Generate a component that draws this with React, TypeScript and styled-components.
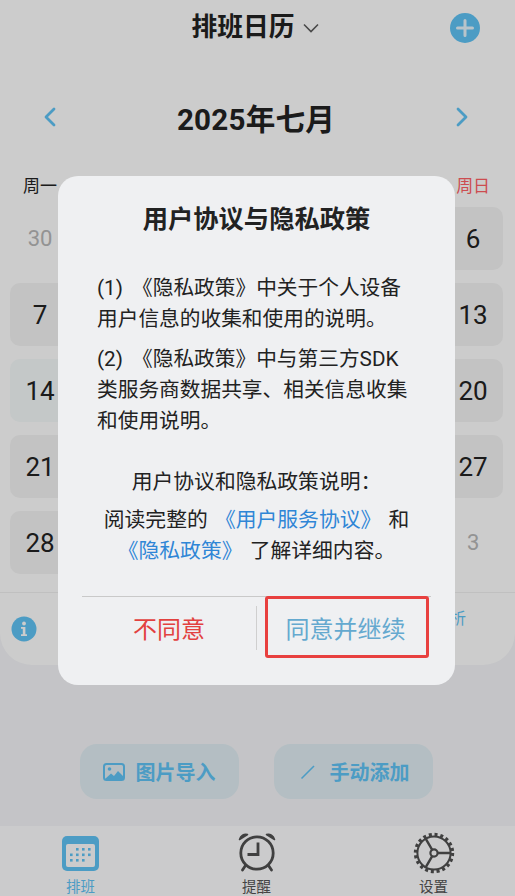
import React from 'react';
import styled, { createGlobalStyle } from 'styled-components';

const GlobalStyle = createGlobalStyle`
  html, body {
    margin: 0;
    padding: 0;
    background: #f5f6f9;
    font-family: Roboto, "Noto Sans CJK SC", sans-serif;
  }
  * { box-sizing: border-box; }
`;

const weekDays = ['周一', '周二', '周三', '周四', '周五', '周六', '周日'];

const days = [
  30, 1, 2, 3, 4, 5, 6,
  7, 8, 9, 10, 11, 12, 13,
  14, 15, 16, 17, 18, 19, 20,
  21, 22, 23, 24, 25, 26, 27,
  28, 29, 30, 31, 1, 2, 3
];

const Chevron: React.FC<{ dir: 'left' | 'right' }> = ({ dir }) => (
  <svg width="14" height="20" viewBox="0 0 14 20" fill="none">
    <path
      d={dir === 'left' ? 'M11 2 L3 10 L11 18' : 'M3 2 L11 10 L3 18'}
      stroke="#60c4f6"
      strokeWidth="2.8"
      strokeLinecap="round"
      strokeLinejoin="round"
    />
  </svg>
);

const GearIcon = () => (
  <svg width="42" height="42" viewBox="0 0 42 42" fill="none" stroke="#505050">
    <circle cx="21" cy="21" r="16.6" strokeWidth="2" />
    <circle cx="21" cy="21" r="18.4" strokeWidth="3.6" strokeDasharray="3 2.78" />
    <circle cx="21" cy="21" r="3.6" strokeWidth="2.2" />
    <path d="M24.6 21 H38 M19.2 17.9 L12.5 6.3 M19.2 24.1 L12.5 35.7" strokeWidth="2.4" />
  </svg>
);

const ClockIcon = () => (
  <svg width="40" height="40" viewBox="0 0 40 40" fill="none" stroke="#505050">
    <circle cx="20" cy="21" r="16.2" strokeWidth="2.8" />
    <path d="M21 10.5 V22.5 H10.5" strokeWidth="2.8" />
    <path d="M2.5 7.5 C3.5 3.5 7 1.5 10.5 2.5 Z M37.5 7.5 C36.5 3.5 33 1.5 29.5 2.5 Z" fill="#505050" strokeWidth="1.5" strokeLinejoin="round" />
    <path d="M8.5 33.5 L5.5 38 M31.5 33.5 L34.5 38" strokeWidth="2.8" strokeLinecap="round" />
  </svg>
);

const CalendarIcon = () => (
  <svg width="37" height="35" viewBox="0 0 37 35">
    <rect x="0" y="0" width="37" height="35" rx="5" fill="#60c4f6" />
    <rect x="4" y="8" width="29" height="23" rx="2" fill="#fefeff" />
    <g fill="#60c4f6">
      {[
        [14, 12], [20, 12], [26, 12],
        [8, 17.5], [14, 17.5], [20, 17.5], [26, 17.5],
        [8, 23], [14, 23], [20, 23]
      ].map(([x, y]) => (
        <rect key={`${x}-${y}`} x={x} y={y} width="2.6" height="2.6" />
      ))}
    </g>
  </svg>
);

export default function App() {
  return (
    <Screen>
      <GlobalStyle />
      <CalendarCard>
        <Header>
          <span />
          <TitleButton>
            <TitleText>排班日历</TitleText>
            <svg width="16" height="10" viewBox="0 0 16 10" fill="none">
              <path d="M1 1.5 L8 8.5 L15 1.5" stroke="#5c5c5c" strokeWidth="1.6" />
            </svg>
          </TitleButton>
          <PlusButton>
            <svg width="30" height="30" viewBox="0 0 30 30">
              <path d="M15 7.5 V22.5 M7.5 15 H22.5" stroke="#fff" strokeWidth="3" strokeLinecap="round" opacity="0.85" />
            </svg>
          </PlusButton>
        </Header>

        <MonthRow>
          <Chevron dir="left" />
          <MonthTitle>2025年七月</MonthTitle>
          <Chevron dir="right" />
        </MonthRow>

        <WeekRow>
          {weekDays.map((d, i) => (
            <WeekDay key={d} $weekend={i === 6}>{d}</WeekDay>
          ))}
        </WeekRow>

        <DayGrid>
          {days.map((d, i) => {
            const outside = i === 0 || i >= 32;
            return (
              <DayCell key={i} $outside={outside} $tinted={i >= 14 && i <= 15}>
                {d}
              </DayCell>
            );
          })}
        </DayGrid>

        <Footer>
          <InfoIcon>
            <svg width="26" height="26" viewBox="0 0 26 26">
              <circle cx="13" cy="13" r="12.5" fill="#60c4f6" />
              <circle cx="13" cy="7.5" r="1.9" fill="#fff" />
              <path d="M10 11 H14.4 V18.2 H16 V20 H10 V18.2 H11.8 V12.8 H10 Z" fill="#fff" />
            </svg>
          </InfoIcon>
          <FooterLink>排班分析</FooterLink>
        </Footer>
      </CalendarCard>

      <Actions>
        <ActionButton>
          <svg width="22" height="18" viewBox="0 0 22 18">
            <rect x="1" y="1" width="20" height="16" rx="2.5" fill="none" stroke="#60c4f6" strokeWidth="2" />
            <circle cx="6.5" cy="6" r="1.8" fill="#60c4f6" />
            <path d="M2 16 L8 10.5 L11 13 L15 8 L20 13 V16 Z" fill="#60c4f6" />
          </svg>
          图片导入
        </ActionButton>
        <ActionButton>
          <svg width="22" height="18" viewBox="0 0 22 18" fill="none">
            <path d="M4.5 15.5 L17 3" stroke="#60c4f6" strokeWidth="1.6" />
          </svg>
          手动添加
        </ActionButton>
      </Actions>

      <TabBar>
        <Tab $active>
          <CalendarIcon />
          <TabLabel>排班</TabLabel>
        </Tab>
        <Tab>
          <ClockIcon />
          <TabLabel>提醒</TabLabel>
        </Tab>
        <Tab>
          <GearIcon />
          <TabLabel>设置</TabLabel>
        </Tab>
      </TabBar>

      <Overlay>
        <Dialog>
          <DialogTitle>用户协议与隐私政策</DialogTitle>
          <Paragraph>
            (1) 《隐私政策》中关于个人设备
            <br />
            用户信息的收集和使用的说明。
          </Paragraph>
          <Paragraph $gap={9}>
            (2) 《隐私政策》中与第三方SDK
            <br />
            类服务商数据共享、相关信息收集
            <br />
            和使用说明。
          </Paragraph>
          <CenterNote $gap={30}>用户协议和隐私政策说明：</CenterNote>
          <CenterNote $gap={7}>
            阅读完整的 <LinkText>《用户服务协议》</LinkText> 和
            <br />
            <LinkText>《隐私政策》</LinkText> 了解详细内容。
          </CenterNote>
          <DialogButtons>
            <CancelButton>不同意</CancelButton>
            <ButtonDivider />
            <AgreeButton>同意并继续</AgreeButton>
          </DialogButtons>
        </Dialog>
      </Overlay>
    </Screen>
  );
}

const Screen = styled.div`
  position: relative;
  width: 515px;
  height: 896px;
  overflow: hidden;
  display: flex;
  flex-direction: column;
  background: #f5f6f9;
`;

const CalendarCard = styled.div`
  height: 665px;
  flex: none;
  background: #ffffff;
  border-radius: 0 0 32px 32px;
  display: flex;
  flex-direction: column;
`;

const Header = styled.div`
  height: 56px;
  display: grid;
  grid-template-columns: 1fr auto 1fr;
  align-items: center;
  padding: 0 35px;
`;

const TitleButton = styled.div`
  display: flex;
  align-items: center;
  gap: 8px;
  margin-left: -5px;
`;

const TitleText = styled.span`
  font-size: 25.8px;
  line-height: 36px;
  font-weight: 700;
  color: #222;
  margin-top: -3px;
`;

const PlusButton = styled.div`
  width: 30px;
  height: 30px;
  border-radius: 50%;
  background: #60c4f6;
  justify-self: end;
  display: flex;
`;

const MonthRow = styled.div`
  margin-top: 41px;
  height: 40px;
  display: flex;
  align-items: center;
  justify-content: space-between;
  padding: 0 46px 0 43px;
`;

const MonthTitle = styled.div`
  font-size: 29.6px;
  font-weight: 700;
  color: #222;
  letter-spacing: 0.2px;
`;

const WeekRow = styled.div`
  margin-top: 37px;
  height: 24px;
  padding: 0 12px 0 10px;
  display: grid;
  grid-template-columns: repeat(7, 60px);
  column-gap: 12.2px;
`;

const WeekDay = styled.div<{ $weekend?: boolean }>`
  font-size: 17px;
  line-height: 24px;
  text-align: center;
  color: ${(p) => (p.$weekend ? '#ff5f66' : '#222')};
`;

const DayGrid = styled.div`
  margin-top: 9px;
  padding: 0 12px 0 10px;
  display: grid;
  grid-template-columns: repeat(7, 60px);
  grid-auto-rows: 63px;
  column-gap: 12.2px;
  row-gap: 13px;
`;

const DayCell = styled.div<{ $outside?: boolean; $tinted?: boolean }>`
  border-radius: 10px;
  display: flex;
  align-items: center;
  justify-content: center;
  font-size: ${(p) => (p.$outside ? '22px' : '26px')};
  color: ${(p) => (p.$outside ? '#b8b8b8' : '#222')};
  background: ${(p) => (p.$outside ? 'transparent' : p.$tinted ? '#f5fafa' : '#f4f4f4')};
`;

const Footer = styled.div`
  margin-top: 18px;
  flex: 1;
  border-top: 1px solid #f0f0f0;
  padding: 12px 49px 0 11px;
  display: flex;
  justify-content: space-between;
  align-items: flex-start;
`;

const InfoIcon = styled.div`
  margin-top: 11px;
  height: 26px;
`;

const FooterLink = styled.div`
  font-size: 16px;
  color: #60c4f6;
`;

const Actions = styled.div`
  flex: 1;
  padding: 79px 3px 0 0;
  display: flex;
  justify-content: center;
  align-items: flex-start;
  gap: 35px;
`;

const ActionButton = styled.div`
  width: 159px;
  height: 55px;
  border-radius: 17px;
  background: #e1eef4;
  color: #60c4f6;
  font-size: 20px;
  font-weight: 700;
  display: flex;
  align-items: center;
  justify-content: center;
  gap: 11px;
`;

const TabBar = styled.div`
  height: 70px;
  flex: none;
  background: #fefeff;
  display: grid;
  grid-template-columns: 161px 1fr 163px;
`;

const Tab = styled.div<{ $active?: boolean }>`
  display: flex;
  flex-direction: column;
  align-items: center;
  padding-top: ${(p) => (p.$active ? '10px' : '6px')};
  color: ${(p) => (p.$active ? '#60c4f6' : '#555')};
`;

const TabLabel = styled.div`
  margin-top: auto;
  font-size: 14.5px;
  line-height: 17px;
`;

const Overlay = styled.div`
  position: absolute;
  inset: 0;
  background: rgba(0, 0, 0, 0.2);
  display: flex;
  justify-content: center;
  align-items: flex-start;
  padding: 176px 2px 0 0;
`;

const Dialog = styled.div`
  width: 397px;
  height: 509px;
  border-radius: 20px;
  background: #eff0f2;
  padding: 27px 24px 0;
  color: #222;
`;

const DialogTitle = styled.div`
  font-size: 25.3px;
  line-height: 34px;
  font-weight: 700;
  text-align: center;
  margin-bottom: 36px;
`;

const Paragraph = styled.div<{ $gap?: number }>`
  margin: ${(p) => p.$gap ?? 0}px 0 0 15px;
  font-size: 20.7px;
  line-height: 31px;
  word-spacing: 4px;
  white-space: nowrap;
`;

const CenterNote = styled.div<{ $gap?: number }>`
  margin-top: ${(p) => p.$gap ?? 0}px;
  font-size: 20.8px;
  line-height: 31px;
  word-spacing: 2px;
  text-align: center;
  white-space: nowrap;
`;

const LinkText = styled.span`
  color: #2f86d6;
`;

const DialogButtons = styled.div`
  margin-top: 29px;
  height: 62px;
  border-top: 1px solid #c9c9c9;
  display: flex;
  align-items: center;
`;

const CancelButton = styled.div`
  flex: 1;
  text-align: center;
  font-size: 24px;
  color: #e2413f;
`;

const ButtonDivider = styled.div`
  width: 1px;
  height: 44px;
  background: #cfcfcf;
`;

const AgreeButton = styled.div`
  width: 164px;
  height: 62px;
  margin: -1px 2px 0 8px;
  padding-right: 3px;
  border: 3.5px solid #e8403f;
  border-radius: 3px;
  display: flex;
  align-items: center;
  justify-content: center;
  font-size: 24px;
  color: #64a9cf;
`;
